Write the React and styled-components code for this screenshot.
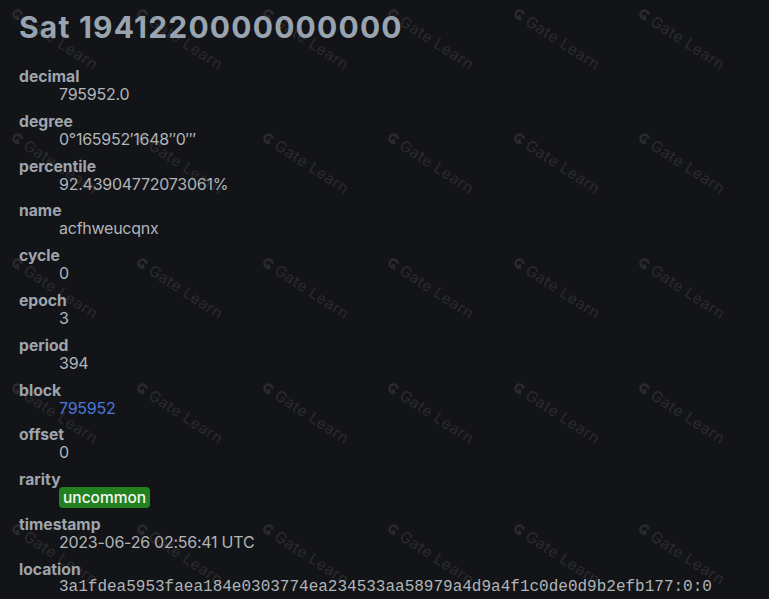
import React from "react";
import styled, { createGlobalStyle } from "styled-components";

const GlobalStyle = createGlobalStyle`
  html, body {
    margin: 0;
    padding: 0;
    background: #131417;
  }
  body {
    font-family: Inter, "Liberation Sans", sans-serif;
  }
`;

const Page = styled.div`
  position: relative;
  min-height: 100vh;
  overflow: hidden;
  background: #131417;
  padding: 10px 19px 0;
  box-sizing: border-box;
`;

const Title = styled.h1`
  margin: 0 0 24px;
  font-size: 30px;
  line-height: 34px;
  font-weight: 700;
  letter-spacing: 1.2px;
  color: #98a4b0;
`;

const List = styled.dl`
  margin: 0;
`;

const Term = styled.dt`
  font-size: 15.7px;
  line-height: 18px;
  font-weight: 700;
  color: #9ea5ad;
`;

const Value = styled.dd`
  margin: 0 0 9.8px 40px;
  line-height: 17px;
  color: ${(p) => (p.$link ? "#4a78d8" : "#b0b5ba")};
  font-family: ${(p) =>
    p.$mono ? '"Liberation Mono", monospace' : 'Inter, "Liberation Sans", sans-serif'};
  font-size: ${(p) => (p.$mono ? "16px" : "16px")};
  letter-spacing: ${(p) => (p.$mono ? "0" : "-0.25px")};
`;

const Badge = styled.span`
  background: #22821f;
  color: #f4f6f4;
  border-radius: 4px;
  padding: 1px 4px 1px;
  font-size: 15.5px;
  font-weight: 500;
  letter-spacing: 0;
`;

const Watermarks = styled.div`
  position: absolute;
  inset: 0;
  pointer-events: none;
`;

const Mark = styled.div`
  position: absolute;
  display: flex;
  align-items: center;
  gap: 3px;
  transform: rotate(33deg);
  transform-origin: 0 0;
  color: rgba(128, 128, 128, 0.2);
  font-family: Inter, "Liberation Sans", sans-serif;
  font-size: 15.5px;
  font-weight: 500;
  letter-spacing: 0.4px;
  white-space: nowrap;
`;

const GateLogo = () => (
  <svg width="13" height="13" viewBox="0 0 12 12">
    <path
      d="M10.6 3.4 A5 5 0 1 0 10.6 8.6 L8.3 7.3 A2.4 2.4 0 1 1 8.3 4.7 Z"
      fill="rgba(128,128,128,0.2)"
    />
    <rect x="6" y="6" width="2.4" height="2.4" fill="rgba(128,128,128,0.2)" />
  </svg>
);

const rows = [3, 127, 252, 377, 518];
const cols = [17, 142, 268, 393, 519, 644];

const fields = [
  ["decimal", "795952.0"],
  ["degree", "0°165952′1648″0‴"],
  ["percentile", "92.43904772073061%"],
  ["name", "acfhweucqnx"],
  ["cycle", "0"],
  ["epoch", "3"],
  ["period", "394"],
  ["block", "795952", "link"],
  ["offset", "0"],
  ["rarity", "uncommon", "badge"],
  ["timestamp", "2023-06-26 02:56:41 UTC"],
  ["location", "3a1fdea5953faea184e0303774ea234533aa58979a4d9a4f1c0de0d9b2efb177:0:0", "mono"],
];

const App = () => {
  return (
    <Page>
      <GlobalStyle />
      <Title>Sat 1941220000000000</Title>
      <List>
        {fields.map(([term, value, kind]) => (
          <React.Fragment key={term}>
            <Term>{term}</Term>
            <Value $link={kind === "link"} $mono={kind === "mono"}>
              {kind === "badge" ? <Badge>{value}</Badge> : value}
            </Value>
          </React.Fragment>
        ))}
      </List>
      <Watermarks>
        {rows.map((y) =>
          cols.map((x) => (
            <Mark key={`${x}-${y}`} style={{ left: x, top: y }}>
              <GateLogo />
              Gate Learn
            </Mark>
          ))
        )}
      </Watermarks>
    </Page>
  );
};

export default App;
